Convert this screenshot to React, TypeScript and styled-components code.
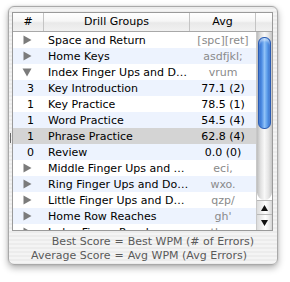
import React from "react";
import styled, { createGlobalStyle, css } from "styled-components";

const Global = createGlobalStyle`
  html, body { margin: 0; padding: 0; background: #ffffff; }
  body { font-family: "DejaVu Sans", "Lucida Grande", sans-serif; font-size: 11px; }
`;

const Page = styled.div`
  width: 290px;
  height: 282px;
  padding: 6px 12px 0 8px;
  box-sizing: border-box;
`;

const Window = styled.div`
  position: relative;
  width: 270px;
  height: 259px;
  box-sizing: border-box;
  border: 1px solid #a9a9a9;
  border-radius: 6px;
  box-shadow: 0 3px 7px rgba(0, 0, 0, 0.3), 0 0 2px rgba(0, 0, 0, 0.15);
  background: repeating-linear-gradient(
    to bottom,
    #ececec 0px,
    #ececec 2px,
    #f4f4f4 2px,
    #f4f4f4 4px
  );
  padding: 5px 4px 0 3px;
  display: flex;
  flex-direction: column;
  &::before {
    content: "";
    position: absolute;
    left: 1px;
    top: 126px;
    width: 1px;
    height: 10px;
    background: #6a6a6a;
  }
`;

const Table = styled.div`
  width: 261px;
  height: 219px;
  box-sizing: border-box;
  border: 1px solid #9a9a9a;
  background: #ffffff;
  display: flex;
  flex-direction: column;
  overflow: hidden;
`;

const cols = css`
  display: grid;
  grid-template-columns: 31px 146px 66px 16px;
`;

const Header = styled.div`
  ${cols};
  height: 19px;
  flex: none;
  box-sizing: border-box;
  border-bottom: 1px solid #a8a8a8;
  background: linear-gradient(to bottom, #ffffff 0%, #f6f6f6 45%, #e9e9e9 55%, #f1f1f1 100%);
`;

const HeadCell = styled.div<{ $last?: boolean }>`
  display: flex;
  align-items: center;
  justify-content: center;
  color: #000;
  font-size: 11px;
  border-right: ${(p) => (p.$last ? "none" : "1px solid #c4c4c4")};
  line-height: 18px;
`;

const Body = styled.div`
  display: flex;
  flex: 1;
  min-height: 0;
`;

const Rows = styled.div`
  width: 243px;
  flex: none;
  overflow: hidden;
`;

const Row = styled.div<{ $bg: string }>`
  display: grid;
  grid-template-columns: 31px 146px 66px;
  height: 16px;
  align-items: center;
  background: ${(p) => p.$bg};
  font-size: 11px;
  color: #000;
`;

const Num = styled.div`
  text-align: center;
  padding-left: 4px;
`;

const Tri = styled.div`
  display: flex;
  justify-content: center;
  align-items: center;
  padding-right: 3px;
`;

const Name = styled.div`
  padding-left: 4px;
  white-space: nowrap;
  overflow: hidden;
`;

const Avg = styled.div<{ $gray?: boolean }>`
  text-align: center;
  white-space: nowrap;
  overflow: hidden;
  color: ${(p) => (p.$gray ? "#8a8a8a" : "#000")};
`;

const Scroll = styled.div`
  width: 16px;
  flex: none;
  display: flex;
  flex-direction: column;
  border-left: 1px solid #c8c8c8;
  box-sizing: border-box;
`;

const Track = styled.div`
  height: 168px;
  flex: none;
  position: relative;
  box-sizing: border-box;
  border-radius: 0 0 8px 8px;
  background: linear-gradient(
    to right,
    #bdbdbd 0%,
    #e2e2e2 25%,
    #f8f8f8 50%,
    #e6e6e6 75%,
    #c6c6c6 100%
  );
  padding: 5px 1px 0 1px;
`;

const Thumb = styled.div`
  height: 92px;
  box-sizing: border-box;
  border: 1px solid #2a5cb3;
  border-radius: 6px;
  background: linear-gradient(
    to right,
    #2b66c8 0%,
    #4f8ee4 25%,
    #8fc1f7 50%,
    #5b9cea 75%,
    #2c68c9 100%
  );
  box-shadow: inset 0 3px 2px rgba(255, 255, 255, 0.45);
`;

const Arrow = styled.div<{ $h: number }>`
  height: ${(p) => p.$h}px;
  flex: none;
  display: flex;
  align-items: center;
  justify-content: center;
  box-sizing: border-box;
  border-top: 1px solid #b8b8b8;
  background: linear-gradient(to right, #dcdcdc 0%, #f4f4f4 40%, #ffffff 55%, #ececec 80%, #d4d4d4 100%);
`;

const Footer = styled.div`
  display: grid;
  grid-template-columns: auto auto auto;
  justify-content: center;
  column-gap: 4px;
  margin-top: 4px;
  color: #5a5a5a;
  font-size: 11px;
  line-height: 14px;
`;

const FL = styled.span`
  text-align: right;
`;

const RightTri = () => (
  <svg width="9" height="10" viewBox="0 0 9 10">
    <path d="M0.5 0.5 L8.5 5 L0.5 9.5 Z" fill="#7b7b7b" />
  </svg>
);

const DownTri = () => (
  <svg width="10" height="9" viewBox="0 0 10 9">
    <path d="M0.5 0.5 L9.5 0.5 L5 8.5 Z" fill="#7b7b7b" />
  </svg>
);

type R = {
  n?: string;
  tri?: "r" | "d";
  name: string;
  avg: string;
  gray?: boolean;
};

const rows: R[] = [
  { tri: "r", name: "Space and Return", avg: "[spc][ret]", gray: true },
  { tri: "r", name: "Home Keys", avg: "asdfjkl;", gray: true },
  { tri: "d", name: "Index Finger Ups and D…", avg: "vrum", gray: true },
  { n: "3", name: "Key Introduction", avg: "77.1 (2)" },
  { n: "1", name: "Key Practice", avg: "78.5 (1)" },
  { n: "1", name: "Word Practice", avg: "54.5 (4)" },
  { n: "1", name: "Phrase Practice", avg: "62.8 (4)" },
  { n: "0", name: "Review", avg: "0.0 (0)" },
  { tri: "r", name: "Middle Finger Ups and …", avg: "eci,", gray: true },
  { tri: "r", name: "Ring Finger Ups and Do…", avg: "wxo.", gray: true },
  { tri: "r", name: "Little Finger Ups and D…", avg: "qzp/", gray: true },
  { tri: "r", name: "Home Row Reaches", avg: "gh'", gray: true },
  { tri: "r", name: "Index Finger Reaches", avg: "tbyn", gray: true },
];

const SELECTED = 6;

export default function App() {
  return (
    <>
      <Global />
      <Page>
        <Window>
          <Table>
            <Header>
              <HeadCell>#</HeadCell>
              <HeadCell>Drill Groups</HeadCell>
              <HeadCell>Avg</HeadCell>
              <HeadCell $last />
            </Header>
            <Body>
              <Rows>
                {rows.map((r, i) => (
                  <Row
                    key={i}
                    $bg={i === SELECTED ? "#d4d4d4" : i % 2 === 1 ? "#edf3fe" : "#ffffff"}
                  >
                    {r.tri ? (
                      <Tri>{r.tri === "r" ? <RightTri /> : <DownTri />}</Tri>
                    ) : (
                      <Num>{r.n}</Num>
                    )}
                    <Name>{r.name}</Name>
                    <Avg $gray={r.gray}>{r.avg}</Avg>
                  </Row>
                ))}
              </Rows>
              <Scroll>
                <Track>
                  <Thumb />
                </Track>
                <Arrow $h={14}>
                  <svg width="7" height="6" viewBox="0 0 7 6">
                    <path d="M3.5 0 L7 6 L0 6 Z" fill="#111" />
                  </svg>
                </Arrow>
                <Arrow $h={16}>
                  <svg width="7" height="6" viewBox="0 0 7 6">
                    <path d="M0 0 L7 0 L3.5 6 Z" fill="#111" />
                  </svg>
                </Arrow>
              </Scroll>
            </Body>
          </Table>
          <Footer>
            <FL>Best Score</FL>
            <span>=</span>
            <span>Best WPM (# of Errors)</span>
            <FL>Average Score</FL>
            <span>=</span>
            <span>Avg WPM (Avg Errors)</span>
          </Footer>
        </Window>
      </Page>
    </>
  );
}
